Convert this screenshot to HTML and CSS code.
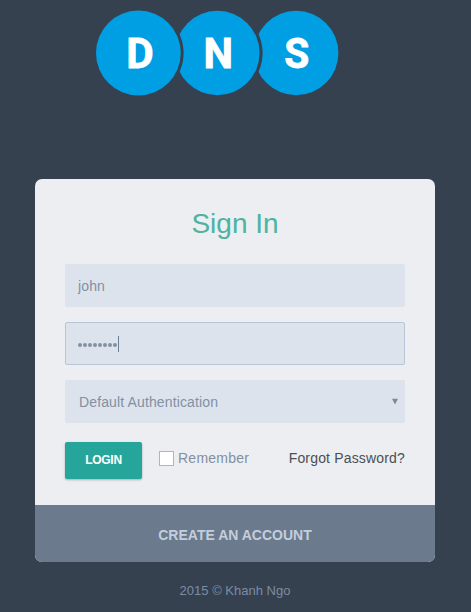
FILE: index.html
```html
<!DOCTYPE html>
<html lang="en">
<head>
<meta charset="utf-8">
<title>Sign In</title>
<link rel="stylesheet" href="styles.css">
</head>
<body>
<header class="logo">
  <svg width="246" height="88" viewBox="94 9 246 88" role="img" aria-label="DNS">
    <g class="discs">
      <circle cx="296.2" cy="53" r="42.2"/>
      <circle class="gap" cx="217.4" cy="53" r="45.2"/>
      <circle cx="217.4" cy="53" r="42.2"/>
      <circle class="gap" cx="138.4" cy="53" r="45.2"/>
      <circle cx="138.4" cy="53" r="42.4"/>
    </g>
    <g class="letters">
      <text x="126.2" y="67.7" textLength="27.4" lengthAdjust="spacingAndGlyphs">D</text>
      <text x="203.5" y="67.7" textLength="29.5" lengthAdjust="spacingAndGlyphs">N</text>
      <text x="284.3" y="67.7" textLength="25" lengthAdjust="spacingAndGlyphs">S</text>
    </g>
  </svg>
</header>
<main class="card">
  <form class="form">
    <h1 class="title">Sign In</h1>
    <div class="field">john</div>
    <div class="field focused"><span class="dots"><i></i><i></i><i></i><i></i><i></i><i></i><i></i><i></i></span><span class="caret"></span></div>
    <div class="field select"><span>Default Authentication</span>
      <svg width="8" height="7" viewBox="0 0 8 7"><path d="M1 .8h6L4 6.5z"/></svg>
    </div>
    <div class="actions">
      <button class="login" type="button">LOGIN</button>
      <span class="box"></span>
      <span class="remember">Remember</span>
      <a class="forgot">Forgot Password?</a>
    </div>
  </form>
  <div class="create"><a>CREATE AN ACCOUNT</a></div>
</main>
<footer class="copyright">2015 © Khanh Ngo</footer>
</body>
</html>
```

FILE: styles.css
```css
* { box-sizing: border-box; }
body {
  margin: 0;
  height: 612px;
  overflow: hidden;
  background: #364150;
  font-family: "Liberation Sans", Arial, sans-serif;
  font-size: 14px;
}
.logo { height: 179px; padding: 9px 0 0 94px; }
.logo svg { display: block; }
.discs { fill: #009fe3; }
.discs .gap { fill: #364150; }
.letters {
  fill: #fff;
  stroke: #fff;
  stroke-width: .8;
  font: 700 43px Roboto, sans-serif;
}
.card {
  width: 400px;
  margin: 0 36px 0 35px;
  border-radius: 7px;
  overflow: hidden;
  background: #eceef1;
}
.form { height: 326px; padding: 28px 30px 0; }
.title {
  margin: 0 0 23px;
  color: #4db3a2;
  font-size: 28px;
  font-weight: 400;
  line-height: 34px;
  text-align: center;
}
.field {
  display: flex;
  align-items: center;
  height: 43px;
  margin-bottom: 15px;
  padding: 1px 12px 0;
  border: 1px solid #dde3ec;
  border-radius: 2px;
  background: #dde3ec;
  color: #8290a3;
  letter-spacing: .13px;
}
.focused { border-color: #b9c4d7; }
.dots { display: flex; gap: 1px; padding-top: 1px; margin-right: -1px; }
.dots i { width: 4px; height: 4px; border-radius: 50%; background: #8290a3; }
.caret { width: 1px; height: 16px; margin-left: 2px; background: #6f7f97; }
.select { justify-content: space-between; padding: 1px 5px 0 13px; }
.select svg { fill: #85898f; margin-top: -2px; }
.actions { display: flex; align-items: center; height: 37px; margin-top: 19px; }
.login {
  width: 77px;
  height: 37px;
  padding: 0 0 2px;
  border: 0;
  border-radius: 2px;
  background: #26a69a;
  box-shadow: 0 1px 3px rgba(0, 0, 0, .1), 0 1px 2px rgba(0, 0, 0, .18);
  color: #fff;
  font: 700 12px "Liberation Sans", Arial, sans-serif;
  letter-spacing: -.3px;
}
.box {
  width: 15px;
  height: 15px;
  margin: -5px 4px 0 17px;
  border: 1px solid #b2b4b6;
  background: #fff;
}
.remember, .forgot { margin-top: -6px; font-size: 14px; letter-spacing: .17px; }
.remember { color: #8290a3; letter-spacing: .25px; }
.forgot { margin-left: auto; color: #4b4f55; }
.create {
  display: flex;
  align-items: center;
  justify-content: center;
  height: 57px;
  padding-top: 3px;
  background: #6c7a8d;
  color: #c3cedd;
  font-weight: 700;
}
.copyright {
  width: 400px;
  margin: 21px 0 0 35px;
  color: #7a8ca5;
  font-size: 13px;
  line-height: 16px;
  text-align: center;
}
```
